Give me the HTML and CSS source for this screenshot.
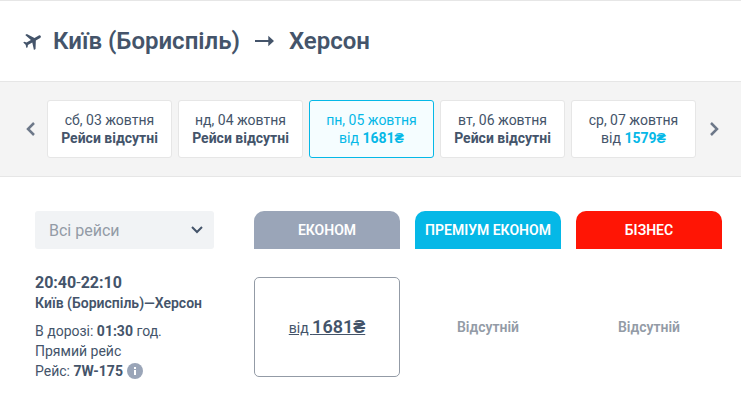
FILE: index.html
```html
<!DOCTYPE html>
<html lang="uk">

<head>
    <meta charset="UTF-8">
    <meta name="viewport" content="width=device-width, initial-scale=1.0">
    <title>Київ (Бориспіль) → Херсон</title>
    <link rel="stylesheet" href="styles.css">
</head>

<body>

    <header class="route">
        <svg class="route-plane" viewBox="0 0 24 24" aria-hidden="true">
            <path transform="rotate(60 12 12)" d="M21 16v-2l-8-5V3.500c0-.83-.67-1.500-1.500-1.500S10 2.670 10 3.500V9l-8 5v2l8-2.500V19l-2 1.500V22l3.500-1 3.500 1v-1.500L13 19v-5.500l8 2.500z"/>
        </svg>
        <h1 class="route-title">
            <span>Київ (Бориспіль)</span>
            <svg class="route-arrow" viewBox="0 0 20 12" aria-label="до">
                <path d="M0 5h14V0.500L20 6l-6 5.500V7H0z"/>
            </svg>
            <span>Херсон</span>
        </h1>
    </header>

    <nav class="dates">
        <button class="dates-nav" type="button" aria-label="Попередні дати">
            <svg viewBox="0 0 10 16"><path d="M8 2L2 8l6 6"/></svg>
        </button>
        <div class="dates-list">
            <button class="date" type="button">сб, 03 жовтня<br><b>Рейси відсутні</b></button>
            <button class="date" type="button">нд, 04 жовтня<br><b>Рейси відсутні</b></button>
            <button class="date active" type="button">пн, 05 жовтня<br>від <b>1681₴</b></button>
            <button class="date" type="button">вт, 06 жовтня<br><b>Рейси відсутні</b></button>
            <button class="date" type="button">ср, 07 жовтня<br>від <b class="price">1579₴</b></button>
        </div>
        <button class="dates-nav" type="button" aria-label="Наступні дати">
            <svg viewBox="0 0 10 16"><path d="M2 2l6 6-6 6"/></svg>
        </button>
    </nav>

    <main class="results">
        <div class="row">
            <div class="filter">
                <select class="filter-select" aria-label="Фільтр рейсів">
                    <option>Всі рейси</option>
                    <option>Прямі рейси</option>
                </select>
                <svg class="filter-icon" viewBox="0 0 12 8" aria-hidden="true"><path d="M1 1l5 5 5-5"/></svg>
            </div>
            <div class="fares">
                <div class="fare-head economy">ЕКОНОМ</div>
                <div class="fare-head premium">ПРЕМІУМ ЕКОНОМ</div>
                <div class="fare-head business">БІЗНЕС</div>
            </div>
        </div>

        <div class="row flight">
            <div class="info">
                <div class="info-time"><b>20:40</b>-<b>22:10</b></div>
                <div class="info-route">Київ (Бориспіль)—Херсон</div>
                <div class="info-details">
                    <div>В дорозі: <b>01:30</b> год.</div>
                    <div>Прямий рейс</div>
                    <div class="info-number">
                        <span>Рейс: <b>7W-175</b></span>
                        <button class="info-button" type="button" aria-label="Інформація про рейс">
                            <svg viewBox="0 0 16 16">
                                <circle cx="8" cy="8" r="8"/>
                                <path d="M7 4h2v2H7zM7 7h2v5H7z"/>
                            </svg>
                        </button>
                    </div>
                </div>
            </div>
            <div class="fares">
                <a class="fare selected" href="#">від <b>1681₴</b></a>
                <div class="fare">Відсутній</div>
                <div class="fare">Відсутній</div>
            </div>
        </div>
    </main>

</body>

</html>
```

FILE: styles.css
```css
* {
    box-sizing: border-box;
}

body {
    margin: 0;
    font-family: Roboto, "Liberation Sans", sans-serif;
    font-size: 14px;
    line-height: 20px;
    color: #44546a;
    background-color: #fff;
}

button,
select {
    font-family: inherit;
    color: inherit;
    cursor: pointer;
}

/* route */
.route {
    display: flex;
    align-items: center;
    gap: 9px;
    padding: 24px 22px;
    border-top: 1px solid #e6e6e6;
}

.route-plane {
    width: 22px;
    height: 22px;
    fill: #44546a;
}

.route-title {
    display: flex;
    align-items: center;
    gap: 15px;
    margin: 0;
    font-size: 24px;
    line-height: 32px;
    font-weight: 600;
}

.route-arrow {
    width: 19px;
    height: 12px;
    fill: #44546a;
}

/* dates */
.dates {
    display: flex;
    align-items: center;
    justify-content: space-between;
    padding: 18px 11px 18px 15px;
    background-color: #f4f4f4;
    border-top: 1px solid #e6e6e6;
    border-bottom: 1px solid #e6e6e6;
}

.dates-nav {
    display: flex;
    justify-content: center;
    width: 32px;
    padding: 8px 0;
    background: none;
    border: none;
}

.dates-nav svg {
    width: 10px;
    height: 16px;
    fill: none;
    stroke: #6d7889;
    stroke-width: 2.500;
}

.dates-list {
    display: grid;
    flex: 1;
    grid-template-columns: repeat(5, 1fr);
    gap: 6px;
    margin-right: 2px;
}

.date {
    padding: 10px 0;
    font-size: 14px;
    line-height: 18px;
    text-align: center;
    background-color: #fff;
    border: 1px solid #e6e6e6;
    border-radius: 3px;
}

.date.active {
    color: #05b8e7;
    background-color: #f5fdff;
    border-color: #05b8e7;
}

.price {
    color: #05b8e7;
}

/* results */
.results {
    padding: 34px 19px 34px 35px;
}

.row {
    display: grid;
    grid-template-columns: 179fr 468fr;
    gap: 40px;
}

.fares {
    display: grid;
    grid-template-columns: repeat(3, 1fr);
    gap: 15px;
}

.filter {
    position: relative;
}

.filter-select {
    width: 100%;
    height: 38px;
    padding: 0 14px;
    font-size: 16px;
    color: #939ba6;
    background-color: #f1f3f5;
    border: none;
    border-radius: 3px;
    appearance: none;
}

.filter-icon {
    position: absolute;
    top: 15px;
    right: 11px;
    width: 12px;
    height: 8px;
    fill: none;
    stroke: #44546a;
    stroke-width: 2;
    pointer-events: none;
}

.fare-head {
    font-weight: 600;
    line-height: 38px;
    color: #fff;
    text-align: center;
    white-space: nowrap;
    border-radius: 10px 10px 0 0;
}

.economy {
    background-color: #9aa5b8;
}

.premium {
    background-color: #05b8e7;
}

.business {
    background-color: #ff1505;
}

.flight {
    align-items: start;
    margin-top: 24px;
}

.info-time {
    font-size: 16px;
}

.info-route {
    font-weight: 600;
    white-space: nowrap;
}

.info-details {
    margin-top: 8px;
}

.info-number {
    display: flex;
    align-items: center;
    gap: 4px;
}

.info-button {
    display: flex;
    padding: 0;
    background: none;
    border: none;
}

.info-button svg {
    width: 16px;
    height: 16px;
}

.info-button circle {
    fill: #9aa5b8;
}

.info-button path {
    fill: #fff;
}

.fare {
    display: flex;
    align-items: center;
    justify-content: center;
    height: 100px;
    margin-top: 4px;
    font-weight: 600;
    color: #939ba6;
}

.fare.selected {
    display: block;
    font-weight: 400;
    line-height: 98px;
    color: #44546a;
    text-align: center;
    border: 1px solid #939ba6;
    border-radius: 5px;
}

.fare.selected b {
    font-size: 18px;
    font-weight: 600;
}
```
